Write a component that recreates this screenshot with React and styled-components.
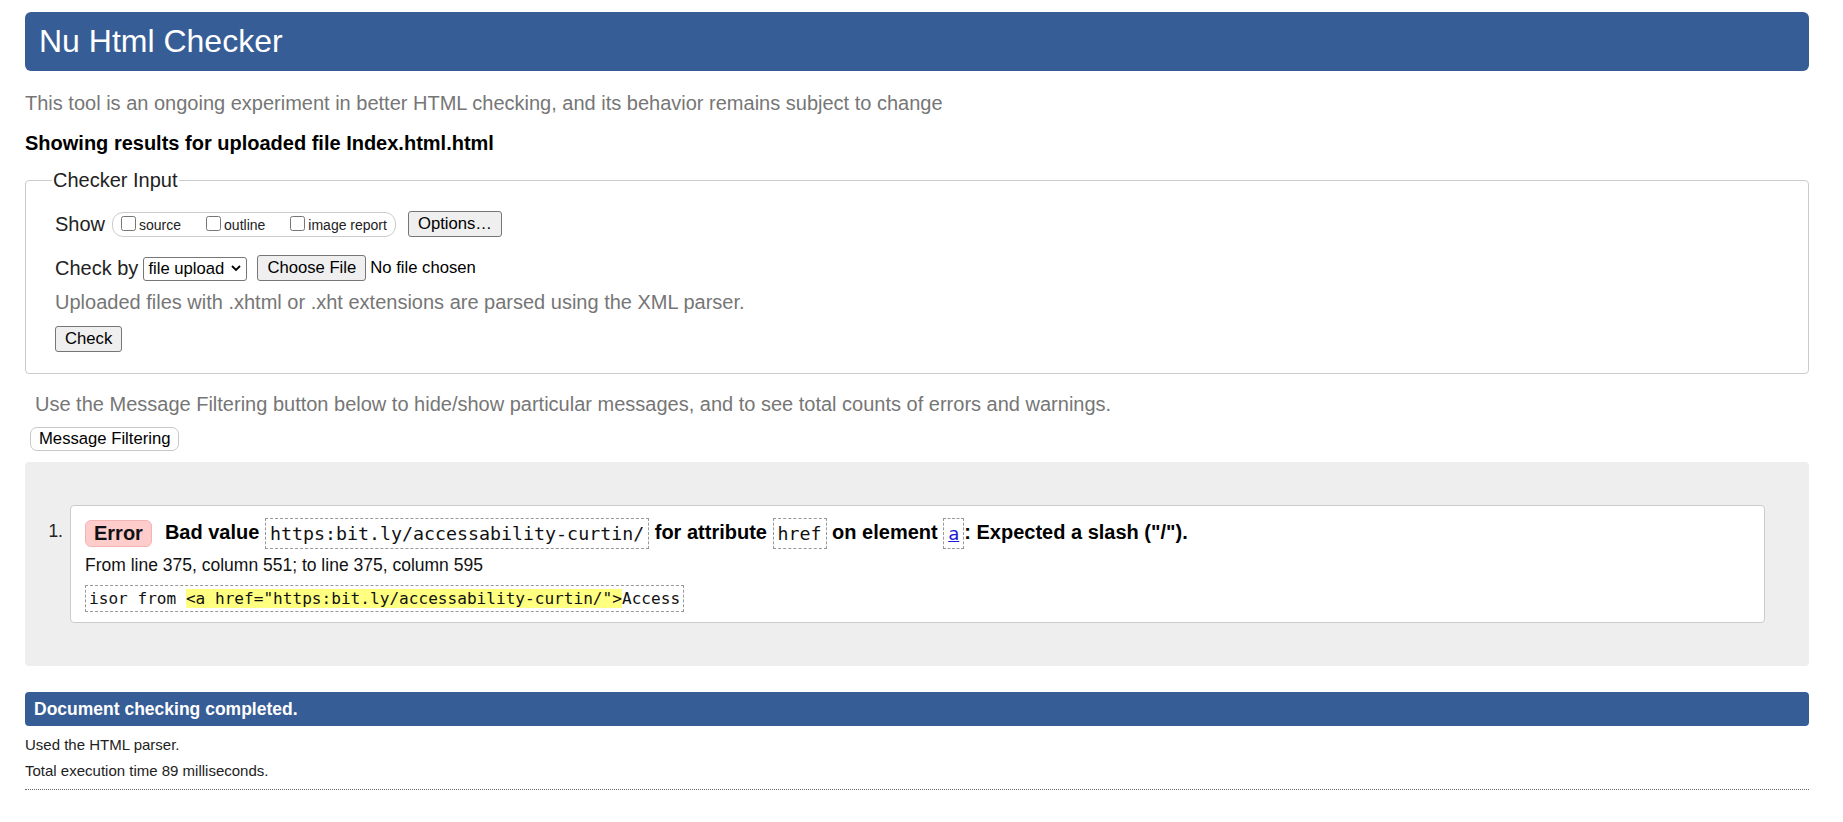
import React from "react";
import styled, { createGlobalStyle } from "styled-components";

const Global = createGlobalStyle`
  html, body { margin: 0; padding: 0; background: #fff; }
  body {
    font-family: "Liberation Sans", Arial, sans-serif;
    font-size: 20px;
    color: #000;
  }
  * { box-sizing: border-box; }
`;

const Page = styled.div`
  padding: 12px 34px 0 25px;
`;

const Header = styled.h1`
  margin: 0;
  height: 59px;
  display: flex;
  align-items: center;
  padding: 0 14px;
  background: #365d95;
  color: #fff;
  font-size: 32px;
  font-weight: normal;
  border-radius: 6px;
`;

const Lead = styled.p`
  margin: ${(p) => p.$mt || 0}px 0 0 ${(p) => p.$indent || 0}px;
  color: #767676;
  font-size: 20px;
  line-height: 24px;
`;

const ResultTitle = styled.h2`
  margin: 16px 0 0;
  font-size: 20px;
  font-weight: bold;
  line-height: 24px;
`;

const Fieldset = styled.fieldset`
  margin: 13px 0 0;
  padding: 0 28px 20px 29px;
  border: 1px solid #ccc;
  border-radius: 4px;
  min-width: 0;
`;

const Legend = styled.legend`
  margin-left: -3px;
  padding: 0 1px;
  font-size: 20px;
  line-height: 24px;
  color: #222;
`;

const Row = styled.div`
  display: flex;
  align-items: center;
  height: ${(p) => p.$h || 28}px;
  margin-top: ${(p) => p.$mt || 0}px;
`;

const RowLabel = styled.span`
  font-size: 20px;
  color: #222;
  margin-right: ${(p) => p.$gap || 6}px;
`;

const CheckGroup = styled.span`
  display: inline-flex;
  align-items: center;
  height: 25px;
  padding: 0 8px;
  border: 1px solid #ccc;
  border-radius: 11px;
  margin-right: 12px;
`;

const CheckItem = styled.label`
  display: inline-flex;
  align-items: center;
  font-size: 14px;
  color: #222;
  margin-right: ${(p) => (p.$last ? 0 : 25)}px;
  padding-top: 2px;
`;

const Box = styled.input`
  width: 15px;
  height: 15px;
  margin: 0 3px 0 0;
  position: relative;
  top: -2px;
`;

const NativeButton = styled.button`
  height: ${(p) => p.$h || 26}px;
  padding: 0 9px;
  font-family: "Liberation Sans", Arial, sans-serif;
  font-size: 16.67px;
  color: #000;
  background: #efefef;
  border: 1px solid #767676;
  border-radius: 3px;
`;

const SelectWrap = styled.span`
  position: relative;
  display: inline-block;
  margin-right: 10px;
  height: 24px;
`;

const Select = styled.select`
  appearance: none;
  -webkit-appearance: none;
  width: 104px;
  height: 24px;
  padding: 0 0 0 4px;
  font-family: "Liberation Sans", Arial, sans-serif;
  font-size: 16.67px;
  color: #000;
  background: #fff;
  border: 1px solid #767676;
  border-radius: 3px;
`;

const Chevron = styled.svg`
  position: absolute;
  right: 6px;
  top: 8px;
  width: 10px;
  height: 8px;
  pointer-events: none;
`;

const FileInput = styled.input`
  font-family: "Liberation Sans", Arial, sans-serif;
  font-size: 16.67px;
  color: #000;
  &::file-selector-button {
    height: 26px;
    padding: 0 9px;
    margin-right: 4px;
    font-family: "Liberation Sans", Arial, sans-serif;
    font-size: 16.67px;
    background: #efefef;
    border: 1px solid #767676;
    border-radius: 3px;
  }
`;

const FilterButton = styled.button`
  display: block;
  margin-top: 11px;
  height: 24px;
  padding: 0 8px;
  font-family: "Liberation Sans", Arial, sans-serif;
  font-size: 16.67px;
  color: #000;
  background: #fff;
  border: 1px solid #c8c8c8;
  border-radius: 7px;
  margin-left: 5px;
`;

const Results = styled.div`
  margin-top: 11px;
  padding: 43px 44px 43px 0;
  background: #eee;
  border-radius: 4px;
`;

const MessageList = styled.ol`
  list-style: none;
  margin: 0;
  padding: 0;
`;

const MessageItem = styled.li`
  display: flex;
  align-items: flex-start;
`;

const ItemNumber = styled.span`
  width: 45px;
  flex: none;
  padding: 15px 7px 0 0;
  text-align: right;
  font-size: 17.5px;
  line-height: 22px;
  color: #222;
`;

const Card = styled.div`
  flex: 1;
  background: #fff;
  border: 1px solid #ccc;
  border-radius: 4px;
  padding: 11px 14px 10px 14px;
`;

const MessageLine = styled.p`
  margin: 0;
  font-size: 20px;
  font-weight: bold;
  line-height: 31px;
  height: 31px;
  white-space: nowrap;
`;

const Badge = styled.strong`
  display: inline-block;
  vertical-align: middle;
  height: 27px;
  line-height: 25px;
  padding: 0 8px;
  margin-right: 13px;
  background: #fcc;
  border: 1px solid #f3b4b4;
  border-radius: 6px;
  color: #111;
`;

const Code = styled.code`
  display: inline-block;
  vertical-align: middle;
  height: 31px;
  line-height: 29px;
  padding: 0 4px;
  border: 1px dashed #999;
  font-family: "DejaVu Sans Mono", "Liberation Mono", monospace;
  font-size: 18.3px;
  font-weight: normal;
  color: #111;
`;

const Link = styled.a`
  color: #1a1ad6;
  text-decoration: underline;
`;

const Location = styled.p`
  margin: 6px 0 0;
  font-size: 17.5px;
  line-height: 22px;
  color: #111;
`;

const Extract = styled.code`
  display: inline-block;
  margin-top: 9px;
  height: 27px;
  line-height: 25px;
  padding: 0 3px;
  border: 1px dashed #999;
  font-family: "DejaVu Sans Mono", "Liberation Mono", monospace;
  font-size: 16.1px;
  color: #111;
  white-space: pre;
`;

const Mark = styled.mark`
  background: #ffff80;
  color: inherit;
`;

const DoneBar = styled.h2`
  margin: 26px 0 0;
  height: 34px;
  display: flex;
  align-items: center;
  padding: 0 9px;
  background: #365d95;
  color: #fff;
  font-size: 17.5px;
  font-weight: bold;
  border-radius: 4px;
`;

const Details = styled.div`
  margin-top: 6px;
  padding-bottom: 5px;
  border-bottom: 1px dotted #666;
`;

const Detail = styled.p`
  margin: 0;
  font-size: 15px;
  line-height: 26px;
  color: #222;
`;

export default function App() {
  return (
    <Page>
      <Global />
      <Header>Nu Html Checker</Header>
      <Lead $mt={20}>
        This tool is an ongoing experiment in better HTML checking, and its
        behavior remains subject to change
      </Lead>
      <ResultTitle>Showing results for uploaded file Index.html.html</ResultTitle>

      <Fieldset>
        <Legend>Checker Input</Legend>
        <Row $mt={18}>
          <RowLabel $gap={7}>Show</RowLabel>
          <CheckGroup>
            <CheckItem>
              <Box type="checkbox" />
              source
            </CheckItem>
            <CheckItem>
              <Box type="checkbox" />
              outline
            </CheckItem>
            <CheckItem $last>
              <Box type="checkbox" />
              image report
            </CheckItem>
          </CheckGroup>
          <NativeButton type="button">Options…</NativeButton>
        </Row>
        <Row $mt={16}>
          <RowLabel $gap={5}>Check by</RowLabel>
          <SelectWrap>
            <Select defaultValue="file">
              <option value="file">file upload</option>
              <option value="address">address</option>
              <option value="text">text input</option>
            </Select>
            <Chevron viewBox="0 0 10 8" aria-hidden="true">
              <path d="M1 2 L5 6 L9 2" fill="none" stroke="#000" strokeWidth="1.8" />
            </Chevron>
          </SelectWrap>
          <FileInput type="file" />
        </Row>
        <Lead $mt={8}>
          Uploaded files with .xhtml or .xht extensions are parsed using the
          XML parser.
        </Lead>
        <Row $mt={11} $h={28}>
          <NativeButton type="button">Check</NativeButton>
        </Row>
      </Fieldset>

      <Lead $mt={18} $indent={10}>
        Use the Message Filtering button below to hide/show particular messages,
        and to see total counts of errors and warnings.
      </Lead>
      <FilterButton type="button">Message Filtering</FilterButton>

      <Results>
        <MessageList>
          <MessageItem>
            <ItemNumber>1.</ItemNumber>
            <Card>
              <MessageLine>
                <Badge>Error</Badge>Bad value{" "}
                <Code>https:bit.ly/accessability-curtin/</Code> for attribute{" "}
                <Code>href</Code> on element{" "}
                <Code>
                  <Link href="#a">a</Link>
                </Code>
                : Expected a slash ("/").
              </MessageLine>
              <Location>From line 375, column 551; to line 375, column 595</Location>
              <Extract>
                isor from <Mark>{'<a href="https:bit.ly/accessability-curtin/">'}</Mark>Access
              </Extract>
            </Card>
          </MessageItem>
        </MessageList>
      </Results>

      <DoneBar>Document checking completed.</DoneBar>
      <Details>
        <Detail>Used the HTML parser.</Detail>
        <Detail>Total execution time 89 milliseconds.</Detail>
      </Details>
    </Page>
  );
}
